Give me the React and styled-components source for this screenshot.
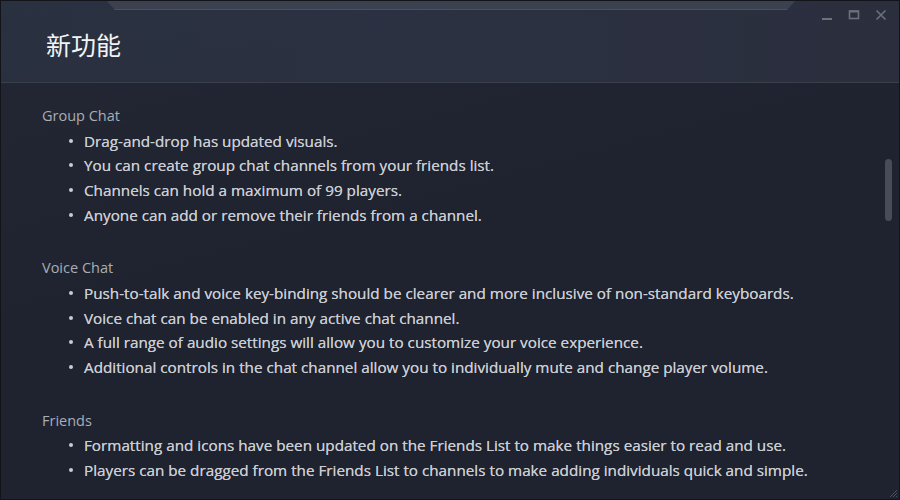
import React from 'react';
import styled, { createGlobalStyle } from 'styled-components';

const GlobalStyle = createGlobalStyle`
    html, body {
        margin: 0;
        padding: 0;
        background: #15171c;
    }
    #root {
        width: 900px;
        height: 500px;
    }
`;

const sections = [
    {
        title: 'Group Chat',
        items: [
            'Drag-and-drop has updated visuals.',
            'You can create group chat channels from your friends list.',
            'Channels can hold a maximum of 99 players.',
            'Anyone can add or remove their friends from a channel.',
        ],
    },
    {
        title: 'Voice Chat',
        items: [
            'Push-to-talk and voice key-binding should be clearer and more inclusive of non-standard keyboards.',
            'Voice chat can be enabled in any active chat channel.',
            'A full range of audio settings will allow you to customize your voice experience.',
            'Additional controls in the chat channel allow you to individually mute and change player volume.',
        ],
    },
    {
        title: 'Friends',
        items: [
            'Formatting and icons have been updated on the Friends List to make things easier to read and use.',
            'Players can be dragged from the Friends List to channels to make adding individuals quick and simple.',
        ],
    },
];

function App() {
    return (
        <>
            <GlobalStyle />
            <Window>
                <Header>
                    <Title>新功能</Title>
                    <Controls>
                        <CtrlButton aria-label="minimize">
                            <svg width="12" height="12" viewBox="0 0 12 12">
                                <rect x="1" y="9" width="10" height="2" fill="currentColor" />
                            </svg>
                        </CtrlButton>
                        <CtrlButton aria-label="maximize">
                            <svg width="12" height="12" viewBox="0 0 12 12">
                                <rect x="1.5" y="2" width="9" height="7.5" fill="none" stroke="currentColor" strokeWidth="1.6" />
                                <rect x="1" y="1.5" width="10" height="2" fill="currentColor" />
                            </svg>
                        </CtrlButton>
                        <CtrlButton aria-label="close">
                            <svg width="12" height="12" viewBox="0 0 12 12">
                                <path d="M1.5 1.5 L10.5 10.5 M10.5 1.5 L1.5 10.5" stroke="currentColor" strokeWidth="1.6" />
                            </svg>
                        </CtrlButton>
                    </Controls>
                </Header>
                <Body>
                    {sections.map((s) => (
                        <Section key={s.title}>
                            <SectionTitle>{s.title}</SectionTitle>
                            <List>
                                {s.items.map((it) => (
                                    <Item key={it}>{it}</Item>
                                ))}
                            </List>
                        </Section>
                    ))}
                    <ScrollThumb />
                    <Grip>
                        <svg width="10" height="10" viewBox="0 0 10 10">
                            <path d="M9 2 L2 9 M9 5 L5 9 M9 8 L8 9" stroke="#4a505c" strokeWidth="1" />
                        </svg>
                    </Grip>
                </Body>
            </Window>
        </>
    );
}

const Window = styled.div`
    width: 900px;
    height: 500px;
    box-sizing: border-box;
    border: 1px solid #121419;
    display: flex;
    flex-direction: column;
    background: #1f2330;
    overflow: hidden;
    font-family: "Open Sans", "Noto Sans", sans-serif;
`;

const Header = styled.div`
    position: relative;
    height: 81px;
    flex-shrink: 0;
    display: flex;
    justify-content: space-between;
    align-items: flex-start;
    border-bottom: 1px solid #3a3f4c;
    background:
        linear-gradient(160deg, rgba(40,52,70,0.55) 0%, rgba(40,52,70,0) 45%),
        linear-gradient(90deg, #2a2e3c 0%, #2c3142 50%, #2a2e3d 100%);
    &::before{
        content: "";
        position: absolute;
        top: -1px;
        left: 105px;
        width: 690px;
        height: 9px;
        background: #3b414f;
        border-bottom: 1px solid #4b5161;
        clip-path: polygon(0 0, 100% 0, calc(100% - 9px) 100%, 9px 100%);
    }
`;

const Title = styled.h1`
    margin: 0;
    padding: 26px 0 0 45px;
    font-family: "Noto Sans CJK SC", "Noto Sans", sans-serif;
    font-size: 25px;
    font-weight: 400;
    color: #f2f3f5;
    line-height: 34px;
`;

const Controls = styled.div`
    display: flex;
    gap: 15px;
    padding: 8px 12px 0 0;
`;

const CtrlButton = styled.span`
    display: flex;
    width: 12px;
    height: 12px;
    color: #6c717c;
`;

const Body = styled.div`
    position: relative;
    flex: 1;
    overflow: hidden;
    padding: 21px 0 0 41px;
    background:
        linear-gradient(165deg, rgba(255,255,255,0.015) 0%, rgba(255,255,255,0) 40%),
        #1f2330;
`;

const Section = styled.div`
    margin-bottom: 29px;
`;

const SectionTitle = styled.div`
    font-size: 14.5px;
    line-height: 24.5px;
    color: #a9adb6;
`;

const List = styled.ul`
    margin: 0;
    padding: 0 0 0 42px;
    list-style: none;
`;

const Item = styled.li`
    position: relative;
    font-size: 15.25px;
    line-height: 24.7px;
    color: #caccd2;
    letter-spacing: 0;
    white-space: nowrap;
    text-shadow: 0 0 0.4px #caccd2;
    &::before{
        content: "";
        position: absolute;
        left: -15px;
        top: 10px;
        width: 4px;
        height: 4px;
        border-radius: 50%;
        background: #caccd2;
    }
`;

const ScrollThumb = styled.div`
    position: absolute;
    top: 76px;
    right: 7px;
    width: 7px;
    height: 62px;
    border-radius: 4px;
    background: #474c57;
`;

const Grip = styled.div`
    position: absolute;
    right: 1px;
    bottom: 1px;
    width: 10px;
    height: 10px;
    display: flex;
`;

export default App;
